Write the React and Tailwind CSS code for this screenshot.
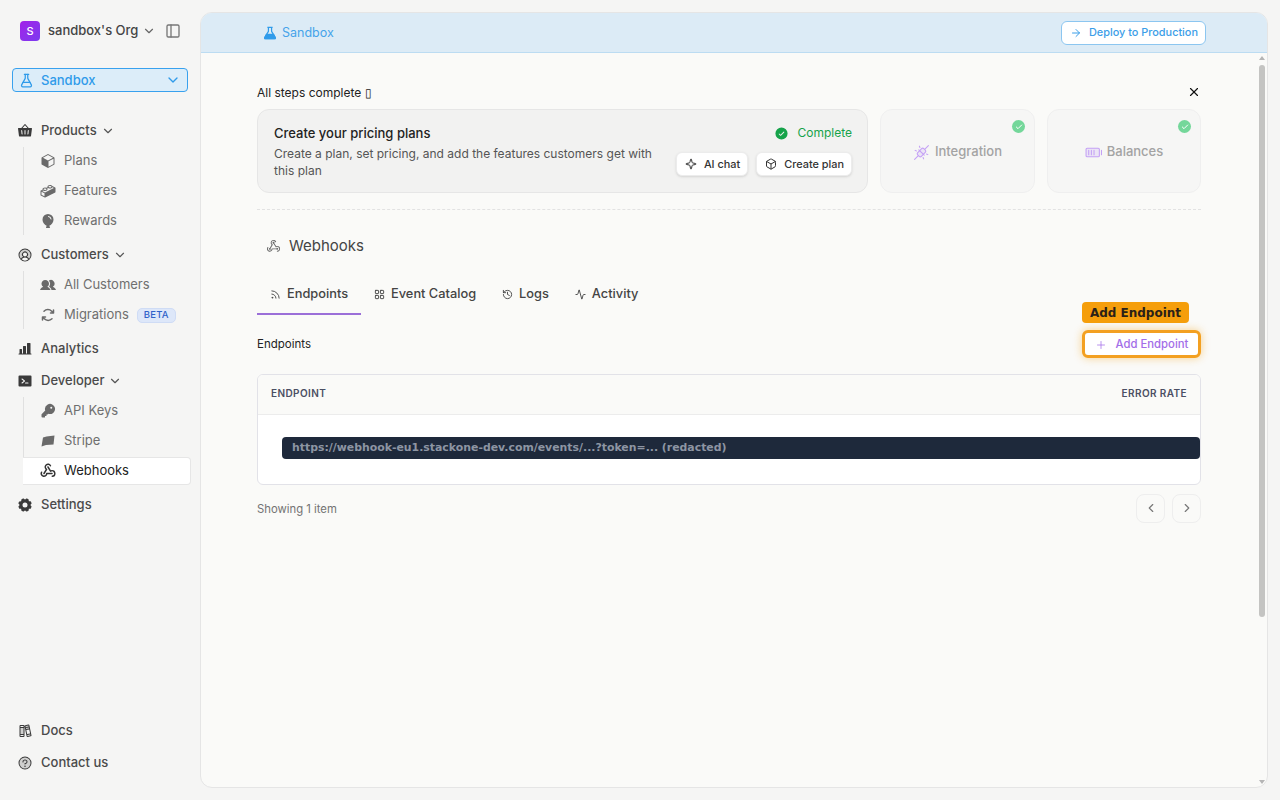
import React from 'react';
import {
  ChevronDown, ChevronLeft, ChevronRight, PanelLeft, FlaskConical, ArrowRight, X, Plus, Sparkle, Box,
  Rss, LayoutGrid, History, Activity, Check,
} from 'lucide-react';
import {
  PiBasketFill, PiCubeFill, PiLegoFill, PiBalloonFill, PiUserCircleDuotone, PiUsersFill,
  PiArrowsClockwiseBold, PiChartBarFill, PiTerminalWindowFill, PiKeyFill, PiWebhooksLogo, PiWebhooksLogoBold,
  PiGearFill, PiBooksDuotone, PiQuestionDuotone, PiPlugsConnectedDuotone, PiBatteryHighDuotone,
  PiCheckCircleFill,
} from 'react-icons/pi';

// Stripe mark in the nav is a skewed flag shape
function StripeFlag({ className }) {
  return (
    <svg viewBox="0 0 16 16" className={className} fill="currentColor">
      <path d="M3 4.5 6.5 3.5 14.5 2.5 13.5 11.5 6 12 1.5 13.5Z" />
    </svg>
  );
}

function BannerFlask({ className }) {
  return (
    <svg viewBox="0 0 16 16" className={className} fill="none" stroke="currentColor" strokeWidth="1.4" strokeLinejoin="round">
      <path d="M5 1.5h6M6.2 1.5v4.6L2 13a1 1 0 0 0 .9 1.5h10.2A1 1 0 0 0 14 13L9.8 6.100V1.5" />
      <path d="M4 9.500h8l2 4.200v.8H2v-.8Z" fill="currentColor" />
    </svg>
  );
}

function NavHead({ icon: Icon, label, chevron, className = '' }) {
  return (
    <div className={`flex items-center h-6 pl-[17px] text-[13px] font-medium text-[#4a4a4a] ${className}`}>
      <Icon className="w-[16px] h-[16px] text-[#3a3a3a] mr-2 shrink-0" />
      <span>{label}</span>
      {chevron && <ChevronDown className="w-3.5 h-3.5 ml-1 text-[#555]" />}
    </div>
  );
}

function NavItem({ icon: Icon, label, active, children }) {
  return (
    <div
      className={`flex items-center h-[28px] pl-[17px] -ml-px text-[13px] ${
        active ? 'bg-white rounded-r border border-[#e6e6e6] border-l-0 text-[#222]' : 'text-[#6f6f6f]'
      }`}
    >
      <Icon className={`w-4 h-4 mr-2 shrink-0 ${active ? 'text-[#333]' : 'text-[#6a6a6a]'}`} />
      <span>{label}</span>
      {children}
    </div>
  );
}

function SubNav({ children }) {
  return <div className="ml-[23px] mr-[9px] mt-1 border-l border-[#e0e0e0] flex flex-col gap-[2px]">{children}</div>;
}

function Sidebar() {
  return (
    <aside className="w-[200px] shrink-0 flex flex-col h-full">
      <div className="flex items-center h-6 mt-[19px] pl-5">
        <div className="w-5 h-5 rounded bg-gradient-to-br from-[#a21fe8] to-[#7b3af0] text-white text-[11px] font-medium flex items-center justify-center">S</div>
        <span className="ml-2 text-[13px] font-medium text-[#444]">sandbox's Org</span>
        <ChevronDown className="w-3.5 h-3.5 ml-1 text-[#666]" />
        <PanelLeft className="w-4 h-4 ml-[9px] text-[#777]" />
      </div>

      <div className="mx-3 mt-[25px] h-6 flex items-center rounded border border-[#38a1ee] bg-[#dcedf9] text-[#2f9bea] text-[13px] font-medium pl-[6px] pr-1.5">
        <FlaskConical className="w-[15px] h-[15px] mr-[7px]" />
        <span className="pt-px">Sandbox</span>
        <ChevronDown className="w-4 h-4 ml-auto" />
      </div>

      <NavHead icon={PiBasketFill} label="Products" chevron className="mt-[27px]" />
      <SubNav>
        <NavItem icon={PiCubeFill} label="Plans" />
        <NavItem icon={PiLegoFill} label="Features" />
        <NavItem icon={PiBalloonFill} label="Rewards" />
      </SubNav>

      <NavHead icon={PiUserCircleDuotone} label="Customers" chevron className="mt-[8px]" />
      <SubNav>
        <NavItem icon={PiUsersFill} label="All Customers" />
        <NavItem icon={PiArrowsClockwiseBold} label="Migrations">
          <span className="ml-2 h-[15px] px-[6px] rounded-[5px] border border-[#cfdcf5] bg-[#dde7f9] text-[#2f62c9] text-[9.5px] font-medium tracking-[0.02em] flex items-center">BETA</span>
        </NavItem>
      </SubNav>

      <NavHead icon={PiChartBarFill} label="Analytics" className="mt-[8px]" />
      <NavHead icon={PiTerminalWindowFill} label="Developer" chevron className="mt-[8px]" />
      <SubNav>
        <NavItem icon={PiKeyFill} label="API Keys" />
        <NavItem icon={StripeFlag} label="Stripe" />
        <NavItem icon={PiWebhooksLogoBold} label="Webhooks" active />
      </SubNav>
      <NavHead icon={PiGearFill} label="Settings" className="mt-[8px]" />

      <NavHead icon={PiBooksDuotone} label="Docs" className="mt-auto" />
      <NavHead icon={PiQuestionDuotone} label="Contact us" className="mt-2 mb-[25px]" />
    </aside>
  );
}

function DoneStep({ icon: Icon, label, className }) {
  return (
    <div className={`relative h-[84px] pt-[2px] rounded-xl border border-[#efefef] bg-[#f6f6f5] flex items-center justify-center text-[13px] font-medium text-[#a3a3a3] ${className}`}>
      <div className="flex items-center">
        <Icon className="w-[17px] h-[17px] text-[#c4a0f5] mr-[5px]" />
        <span>{label}</span>
      </div>
      <span className="absolute top-[10px] right-[9px] w-[13px] h-[13px] rounded-full bg-[#74d79a] flex items-center justify-center">
        <Check className="w-2 h-2 text-white" strokeWidth={3} />
      </span>
    </div>
  );
}

function StepButton({ icon: Icon, label }) {
  return (
    <button className="h-6 pl-2 pr-[7px] flex items-center gap-[7px] rounded-md bg-white border border-[#ececec] shadow-sm text-[10.9px] font-medium text-[#333]">
      <Icon className="w-3 h-3" />
      {label}
    </button>
  );
}

function Tab({ icon: Icon, label, active }) {
  return (
    <div className={`h-[42px] pt-[2px] flex items-center px-[13px] gap-[6px] text-[12.8px] font-medium text-[#444] border-b-2 ${active ? 'border-[#9b6fd8]' : 'border-transparent'}`}>
      <Icon className="w-[11px] h-[11px] text-[#444]" />
      <span>{label}</span>
    </div>
  );
}

// the page's scrollbar, painted over the right edge of the panel
function FakeScrollbar() {
  return (
    <div className="absolute top-10 bottom-0 right-0 w-[10px] flex flex-col items-center">
      <svg viewBox="0 0 6 4" className="w-[6px] h-1 mt-[3px] text-[#b5b5b5]" fill="currentColor"><path d="M3 0 6 4H0Z" /></svg>
      <div className="w-[6px] h-[552px] mt-[5px] rounded-full bg-[#c4c4c2]" />
      <svg viewBox="0 0 6 4" className="w-[6px] h-1 mt-auto mb-[3px] text-[#b5b5b5]" fill="currentColor"><path d="M0 0H6L3 4Z" /></svg>
    </div>
  );
}

export default function App() {
  return (
    <div className="h-[800px] w-[1280px] flex bg-[#f5f5f4] overflow-hidden font-['Inter',sans-serif]">
      <Sidebar />
      <main className="relative w-[1068px] my-3 rounded-xl border border-[#e5e5e5] bg-[#fafaf8] flex flex-col overflow-hidden">
        <header className="h-10 shrink-0 bg-[#dcebf6] border-b border-[#bcdcf2] flex items-center pl-[62px] pr-[61px]">
          <BannerFlask className="w-[14px] h-[14px] text-[#2f9bea]" />
          <span className="ml-[5px] pt-px text-[12.5px] text-[#45a3ea]">Sandbox</span>
          <button className="ml-auto h-6 px-[7px] flex items-center rounded-md border border-[#8cc6f0] bg-white text-[#3b9ee8] text-[10.9px] font-medium">
            <ArrowRight className="w-3 h-3 mr-[7px] ml-px" />
            Deploy to Production
          </button>
        </header>

        <div className="flex-1 overflow-hidden pl-14 pr-[66px] pt-[32px]">
          <div className="flex items-center justify-between h-4 text-[12px] text-[#222]">
            <span>All steps complete ▯</span>
            <X className="w-3.5 h-3.5 text-[#111] -mt-[2px]" />
          </div>

          <div className="flex gap-3 mt-2">
            <div className="flex-1 h-[84px] rounded-xl border border-[#e6e6e6] bg-[#f2f2f1] pl-4 pr-[15px] pt-[14px] flex justify-between">
              <div className="w-[390px]">
                <div className="text-[13px] font-medium leading-[18px] text-[#222]">Create your pricing plans</div>
                <div className="text-[12px] leading-[17px] text-[#555] mt-[3px]">
                  Create a plan, set pricing, and add the features customers get with this plan
                </div>
              </div>
              <div className="flex flex-col items-end">
                <div className="flex items-center h-[18px] text-[12px] text-[#16a34a]">
                  <PiCheckCircleFill className="w-[15px] h-[15px] text-[#16a34a] mr-2" />
                  Complete
                </div>
                <div className="flex gap-2 mt-[10px]">
                  <StepButton icon={Sparkle} label="AI chat" />
                  <StepButton icon={Box} label="Create plan" />
                </div>
              </div>
            </div>
            <DoneStep icon={PiPlugsConnectedDuotone} label="Integration" className="w-[155px]" />
            <DoneStep icon={PiBatteryHighDuotone} label="Balances" className="w-[154px]" />
          </div>

          <div className="mt-4 border-t border-dashed border-[#e2e2e2]" />

          <div className="flex items-center mt-[26px] pl-[9px] h-5 text-[15px] text-[#444]">
            <PiWebhooksLogo className="w-[15px] h-[15px] text-[#666] mr-2" />
            Webhooks
          </div>

          <div className="flex mt-[17px]">
            <Tab icon={Rss} label="Endpoints" active />
            <Tab icon={LayoutGrid} label="Event Catalog" />
            <Tab icon={History} label="Logs" />
            <Tab icon={Activity} label="Activity" />
          </div>

          <div className="flex items-center justify-between mt-[15px] h-[28px]">
            <span className="text-[11.5px] text-[#222] pt-px">Endpoints</span>
            <div className="relative">
              <span className="absolute -top-[28px] left-0 h-[21px] w-[107px] rounded bg-[#f59e0b] flex items-center justify-center text-[12px] font-bold text-[#2a2118] whitespace-nowrap font-['DejaVu_Sans',sans-serif]">
                Add Endpoint
              </span>
              <button className="h-[28px] w-[119px] pt-px flex items-center justify-center rounded-md bg-white text-[#a36ee8] text-[11.3px] font-medium border-[3px] border-[#f3a021] shadow-[0_0_8px_rgba(245,158,11,0.45)]">
                <Plus className="w-3 h-3 mr-[9px]" strokeWidth={1.5} />
                Add Endpoint
              </button>
            </div>
          </div>

          <div className="mt-[16px] rounded-md border border-[#e2e2e8] bg-white overflow-hidden">
            <div className="h-[40px] pb-[2px] bg-[#fafaf8] border-b border-[#ececec] flex items-center justify-between pl-[13px] pr-[13px] text-[10px] font-semibold tracking-[0.04em] text-[#4b4f63]">
              <span>ENDPOINT</span>
              <span>ERROR RATE</span>
            </div>
            <div className="h-[69px] pl-6 flex items-center">
              <div className="w-full h-[22px] -mt-[4px] pt-[2px] rounded bg-[#1e293b] flex items-center pl-[10px] text-[10.9px] font-bold text-[#8d95a3] font-['DejaVu_Sans',sans-serif]">
                https://webhook-eu1.stackone-dev.com/events/...?token=... (redacted)
              </div>
            </div>
          </div>

          <div className="flex items-center justify-between mt-2 h-[30px]">
            <span className="text-[11.3px] text-[#737373] pt-[2px]">Showing 1 item</span>
            <div className="flex gap-[7px]">
              <button className="w-[29px] h-[29px] rounded-lg border border-[#eeeeee] flex items-center justify-center text-[#777]">
                <ChevronLeft className="w-3.5 h-3.5" />
              </button>
              <button className="w-[29px] h-[29px] rounded-lg border border-[#eeeeee] flex items-center justify-center text-[#777]">
                <ChevronRight className="w-3.5 h-3.5" />
              </button>
            </div>
          </div>
        </div>
        <FakeScrollbar />
      </main>
    </div>
  );
}
